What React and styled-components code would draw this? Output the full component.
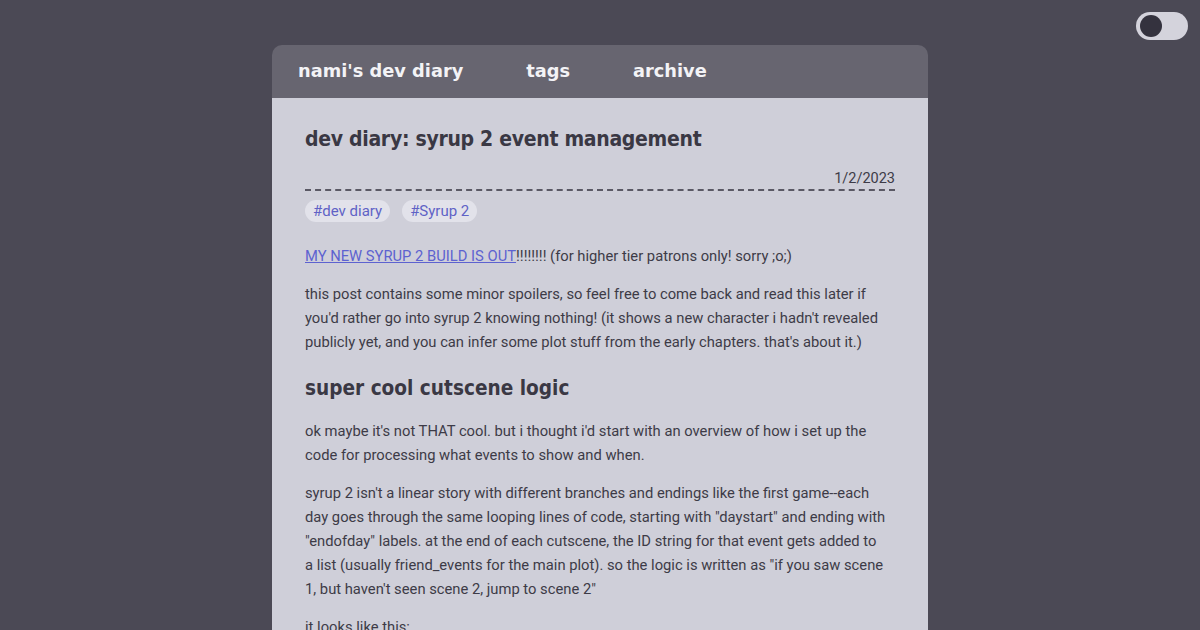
import React from "react";
import styled, { createGlobalStyle } from "styled-components";

const Global = createGlobalStyle`
  html, body { margin: 0; padding: 0; background: #4b4955; }
  body { font-family: Roboto, "Liberation Sans", sans-serif; }
`;

const Page = styled.div`
  min-height: 630px;
  background: #4b4955;
  display: flex;
  justify-content: center;
  padding-top: 45px;
  box-sizing: border-box;
  position: relative;
`;

const Toggle = styled.div`
  position: absolute;
  top: 12px;
  right: 12px;
  width: 52px;
  height: 28px;
  border-radius: 14px;
  background: #d4d3dc;
  display: flex;
  align-items: center;
  padding-left: 4px;
  box-sizing: border-box;
`;

const Knob = styled.div`
  width: 22px;
  height: 22px;
  border-radius: 50%;
  background: #34323e;
`;

const Card = styled.div`
  width: 656px;
  display: flex;
  flex-direction: column;
`;

const Nav = styled.nav`
  height: 53px;
  background: #676570;
  border-radius: 10px 10px 0 0;
  display: flex;
  align-items: center;
  padding-left: 26px;
  padding-bottom: 2px;
  box-sizing: border-box;
  gap: 63px;
`;

const NavLink = styled.a`
  font-family: "DejaVu Sans", Verdana, sans-serif;
  font-weight: bold;
  font-size: 17.8px;
  color: #f3f3f6;
  text-decoration: none;
`;

const Content = styled.main`
  background: #cfcfd9;
  padding: 23px 33px 20px;
  color: #3d3b47;
`;

const Title = styled.h1`
  margin: 0;
  font-family: "DejaVu Sans Condensed", "DejaVu Sans", sans-serif;
  font-weight: 600;
  font-size: 21px;
  letter-spacing: -0.3px;
  line-height: 36px;
  color: #3a3844;
`;

const DateRow = styled.div`
  margin-top: 13px;
  text-align: right;
  font-size: 14.5px;
  line-height: 18px;
  border-bottom: 2px dashed #5a5864;
  padding-bottom: 1px;
  color: #3d3b47;
`;

const Tags = styled.div`
  display: flex;
  gap: 12px;
  margin-top: 9px;
`;

const Tag = styled.span`
  background: #e2e2ea;
  color: #5f62c6;
  font-size: 15px;
  line-height: 22px;
  padding: 0 8px;
  border-radius: 11px;
`;

const P = styled.p`
  margin: ${(p) => p.$top || 14}px 0 0;
  font-size: 14.75px;
  line-height: 24px;
`;

const Link = styled.a`
  color: #5d62d0;
  text-decoration: underline;
`;

const H2 = styled.h2`
  margin: 19px 0 0;
  font-family: "DejaVu Sans Condensed", "DejaVu Sans", sans-serif;
  font-weight: 600;
  font-size: 20.6px;
  line-height: 30px;
  color: #3a3844;
`;

export default function App() {
  return (
    <>
      <Global />
      <Page>
        <Toggle>
          <Knob />
        </Toggle>
        <Card>
          <Nav>
            <NavLink>nami's dev diary</NavLink>
            <NavLink>tags</NavLink>
            <NavLink>archive</NavLink>
          </Nav>
          <Content>
            <Title>dev diary: syrup 2 event management</Title>
            <DateRow>1/2/2023</DateRow>
            <Tags>
              <Tag>#dev diary</Tag>
              <Tag>#Syrup 2</Tag>
            </Tags>
            <P $top={22}>
              <Link>MY NEW SYRUP 2 BUILD IS OUT</Link>!!!!!!!! (for higher tier patrons only! sorry ;o;)
            </P>
            <P>
              this post contains some minor spoilers, so feel free to come back and read this later if
              you'd rather go into syrup 2 knowing nothing! (it shows a new character i hadn't revealed
              publicly yet, and you can infer some plot stuff from the early chapters. that's about it.)
            </P>
            <H2>super cool cutscene logic</H2>
            <P $top={16}>
              ok maybe it's not THAT cool. but i thought i'd start with an overview of how i set up the
              code for processing what events to show and when.
            </P>
            <P>
              syrup 2 isn't a linear story with different branches and endings like the first game--each
              day goes through the same looping lines of code, starting with "daystart" and ending with
              "endofday" labels. at the end of each cutscene, the ID string for that event gets added to
              <br />
              a list (usually friend_events for the main plot). so the logic is written as "if you saw scene
              1, but haven't seen scene 2, jump to scene 2"
            </P>
            <P>it looks like this:</P>
          </Content>
        </Card>
      </Page>
    </>
  );
}
